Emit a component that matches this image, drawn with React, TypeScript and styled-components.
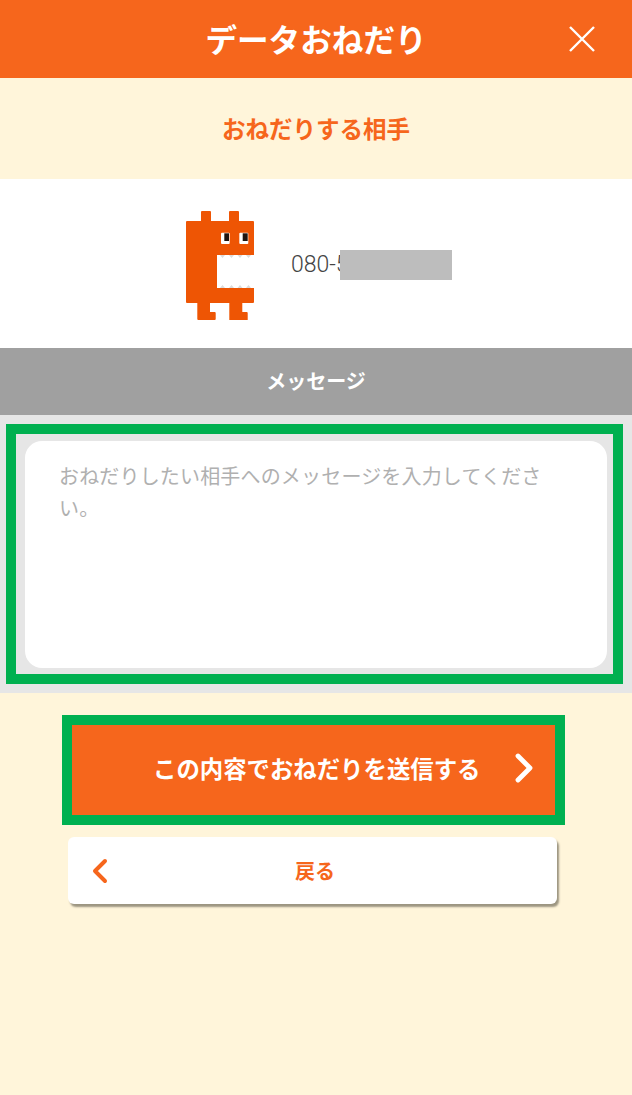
import React from 'react';
import styled, { createGlobalStyle } from 'styled-components';

const GlobalStyle = createGlobalStyle`
  html, body {
    margin: 0;
    padding: 0;
    background: #fff5da;
  }
  * {
    box-sizing: border-box;
  }
`;

const JP_FONT = `"Noto Sans CJK JP", "Liberation Sans", sans-serif`;
const ORANGE = '#f6661c';

const Page = styled.div`
  width: 632px;
  min-height: 1095px;
  background: #fff5da;
  font-family: ${JP_FONT};
`;

const Header = styled.header`
  height: 78px;
  background: ${ORANGE};
  display: grid;
  grid-template-columns: 1fr auto 1fr;
  align-items: center;
  padding: 0 37px;
`;

const HeaderTitle = styled.h1`
  grid-column: 2;
  margin: 0;
  color: #fff;
  font-size: 31.6px;
  font-weight: 700;
  line-height: 1;
`;

const CloseIcon = styled.svg`
  grid-column: 3;
  justify-self: end;
  width: 26px;
  height: 26px;
`;

const PartnerHeading = styled.h2`
  margin: 0;
  height: 101px;
  padding-bottom: 2px;
  display: flex;
  align-items: center;
  justify-content: center;
  color: ${ORANGE};
  font-size: 23.5px;
  font-weight: 700;
`;

const PartnerRow = styled.div`
  height: 169px;
  background: #fff;
  display: flex;
  align-items: center;
  gap: 37px;
  padding: 4px 0 0 186px;
`;

const PhoneNumber = styled.div`
  position: relative;
  width: 161px;
  margin-bottom: 2px;
  color: #444;
  font-family: Roboto, "Liberation Sans", sans-serif;
  font-size: 23px;
  font-weight: 300;
  line-height: 30px;
`;

const PhoneMask = styled.span`
  position: absolute;
  left: 49px;
  top: 0;
  width: 112px;
  height: 30px;
  background: #bdbdbd;
`;

const MessageHeading = styled.h2`
  margin: 0;
  height: 67px;
  padding-bottom: 2px;
  background: #a0a0a0;
  display: flex;
  align-items: center;
  justify-content: center;
  color: #fff;
  font-size: 20px;
  font-weight: 700;
`;

const MessageSection = styled.section`
  height: 278px;
  background: #e6e6e6;
  padding: 9px 9px 9px 6px;
`;

const Highlight = styled.div`
  height: 260px;
  border: 10px solid #00b050;
  padding: 7px 6px 6px 9px;
`;

const MessageBox = styled.div`
  height: 100%;
  background: #fff;
  border-radius: 17px;
  padding: 19px 34px;
  color: #b0b0b0;
  font-size: 20px;
  letter-spacing: 0.17px;
  line-height: 32px;
`;

const Actions = styled.div`
  padding: 22px 0 0 62px;
  display: flex;
  flex-direction: column;
  align-items: flex-start;
`;

const SubmitButton = styled.button`
  width: 503px;
  height: 110px;
  border: 10px solid #00b050;
  background: ${ORANGE};
  color: #fff;
  font-family: ${JP_FONT};
  font-size: 23.4px;
  font-weight: 700;
  display: flex;
  align-items: center;
  justify-content: space-between;
  padding: 0 22px 4px 81px;
`;

const BackButton = styled.button`
  width: 489px;
  height: 67px;
  margin: 12px 0 0 6px;
  border: none;
  border-radius: 6px;
  background: #fff;
  box-shadow: 2px 3px 2px rgba(90, 85, 70, 0.6);
  color: ${ORANGE};
  font-family: ${JP_FONT};
  font-size: 20px;
  font-weight: 700;
  display: grid;
  grid-template-columns: 1fr auto 1fr;
  align-items: center;
  padding: 0 19px 0 24px;
`;

const Chevron = styled.svg<{ $w: number; $h: number }>`
  width: ${(p) => p.$w}px;
  height: ${(p) => p.$h}px;
  display: block;
`;

const Mascot = () => (
  <svg width="68" height="109" viewBox="0 0 68 109" style={{ flex: 'none' }}>
    <path
      fill="#ee5504"
      d="M15 10V1a1 1 0 0 1 1-1h8a1 1 0 0 1 1 1v9h18V1a1 1 0 0 1 1-1h8a1 1 0 0 1 1 1v9h14a1 1 0 0 1 1 1v33H31v33h37v14a1 1 0 0 1-1 1H56.3v9h4.4a1 1 0 0 1 1 1v7a1 1 0 0 1-1 1H44.3a1 1 0 0 1-1-1V92H24v9h4.7a1 1 0 0 1 1 1v6a1 1 0 0 1-1 1H12.3a1 1 0 0 1-1-1V92H1a1 1 0 0 1-1-1V11a1 1 0 0 1 1-1z"
    />
    <rect x="35" y="21.7" width="8.7" height="11.3" rx="1" fill="#fff" />
    <rect x="53.3" y="21.7" width="9" height="11.3" rx="1" fill="#fff" />
    <rect x="38.3" y="22.3" width="4.7" height="7.7" fill="#1f1410" />
    <rect x="56.7" y="22.3" width="5" height="7.7" fill="#1f1410" />
    <path
      fill="#dcdcdc"
      d="M34 44h5l-2.500 3zM43 44h5l-2.500 3zM51.500 44h5l-2.500 3zM60 44h5l-2.500 3zM34 77h5l-2.500-3zM43 77h5l-2.500-3zM51.500 77h5l-2.500-3zM60 77h5l-2.500-3z"
    />
  </svg>
);

export default function App() {
  return (
    <Page>
      <GlobalStyle />
      <Header>
        <HeaderTitle>データおねだり</HeaderTitle>
        <CloseIcon viewBox="0 0 26 26">
          <path d="M1 1l24 24M25 1L1 25" stroke="#fff" strokeWidth="2.4" fill="none" />
        </CloseIcon>
      </Header>

      <PartnerHeading>おねだりする相手</PartnerHeading>
      <PartnerRow>
        <Mascot />
        <PhoneNumber>
          080-5
          <PhoneMask />
        </PhoneNumber>
      </PartnerRow>

      <MessageHeading>メッセージ</MessageHeading>
      <MessageSection>
        <Highlight>
          <MessageBox>おねだりしたい相手へのメッセージを入力してください。</MessageBox>
        </Highlight>
      </MessageSection>

      <Actions>
        <SubmitButton>
          <span>この内容でおねだりを送信する</span>
          <Chevron $w={18} $h={30} viewBox="0 0 18 30">
            <path
              d="M3 3l12 12L3 27"
              stroke="#fff"
              strokeWidth="4.8"
              strokeLinecap="round"
              strokeLinejoin="round"
              fill="none"
            />
          </Chevron>
        </SubmitButton>
        <BackButton>
          <Chevron $w={16} $h={26} viewBox="0 0 16 26">
            <path
              d="M13 3L3 13l10 10"
              stroke={ORANGE}
              strokeWidth="4"
              strokeLinecap="round"
              strokeLinejoin="round"
              fill="none"
            />
          </Chevron>
          <span>戻る</span>
        </BackButton>
      </Actions>
    </Page>
  );
}
